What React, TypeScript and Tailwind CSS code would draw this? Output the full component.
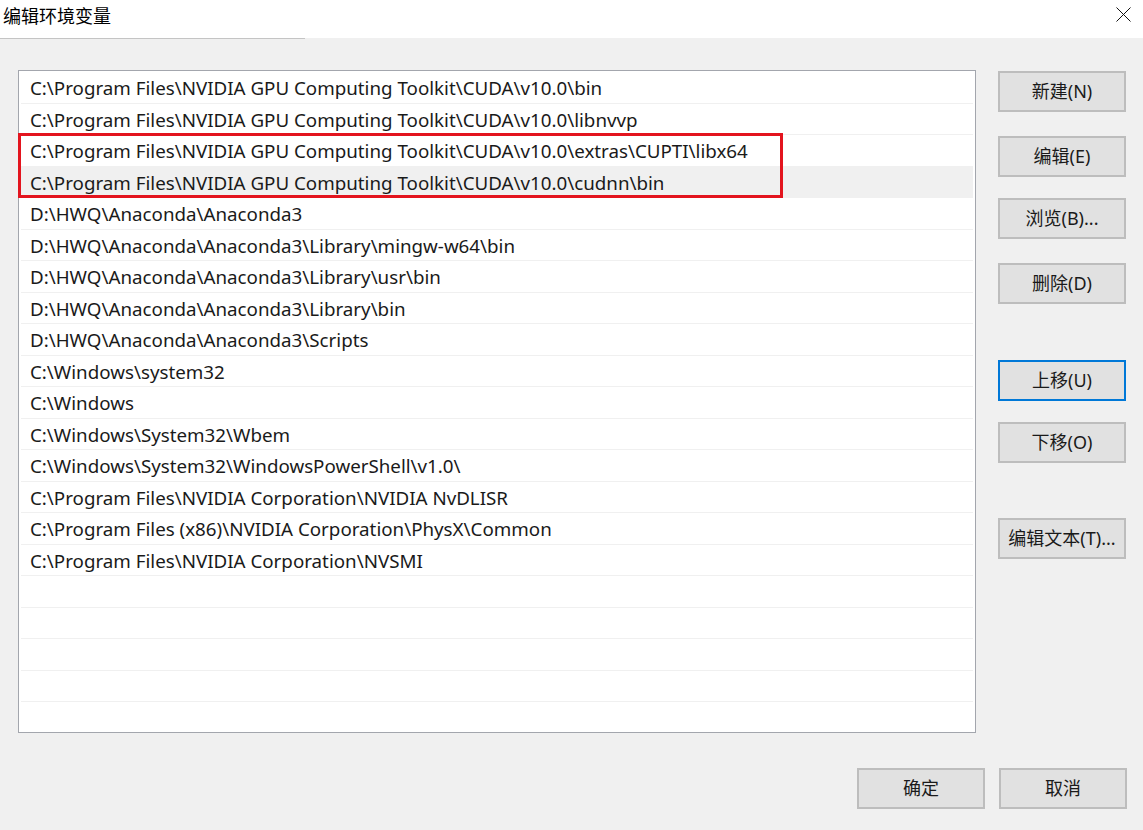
import React from 'react';

const paths = [
  'C:\\Program Files\\NVIDIA GPU Computing Toolkit\\CUDA\\v10.0\\bin',
  'C:\\Program Files\\NVIDIA GPU Computing Toolkit\\CUDA\\v10.0\\libnvvp',
  'C:\\Program Files\\NVIDIA GPU Computing Toolkit\\CUDA\\v10.0\\extras\\CUPTI\\libx64',
  'C:\\Program Files\\NVIDIA GPU Computing Toolkit\\CUDA\\v10.0\\cudnn\\bin',
  'D:\\HWQ\\Anaconda\\Anaconda3',
  'D:\\HWQ\\Anaconda\\Anaconda3\\Library\\mingw-w64\\bin',
  'D:\\HWQ\\Anaconda\\Anaconda3\\Library\\usr\\bin',
  'D:\\HWQ\\Anaconda\\Anaconda3\\Library\\bin',
  'D:\\HWQ\\Anaconda\\Anaconda3\\Scripts',
  'C:\\Windows\\system32',
  'C:\\Windows',
  'C:\\Windows\\System32\\Wbem',
  'C:\\Windows\\System32\\WindowsPowerShell\\v1.0\\',
  'C:\\Program Files\\NVIDIA Corporation\\NVIDIA NvDLISR',
  'C:\\Program Files (x86)\\NVIDIA Corporation\\PhysX\\Common',
  'C:\\Program Files\\NVIDIA Corporation\\NVSMI',
];

const rows = [...paths, ...Array(5).fill('')];

function Btn({ label, focused, className = '' }: { label: string; focused?: boolean; className?: string }) {
  return (
    <button
      className={`w-[128px] h-[41px] bg-[#e1e1e1] border-2 text-[18px] text-[#1a1a1a] flex items-center justify-center ${
        focused ? 'border-[#0078d7]' : 'border-[#bdbdbd]'
      } ${className}`}
    >
      {label}
    </button>
  );
}

export default function App() {
  return (
    <div
      className="relative w-[1143px] h-[830px] bg-[#f0f0f0] overflow-hidden flex flex-col"
      style={{ fontFamily: '"Noto Sans", "Noto Sans CJK SC", sans-serif' }}
    >
      {/* title bar */}
      <div className="h-[38px] bg-white flex items-start justify-between shrink-0">
        <div className="pl-[3px] pt-[2px] text-[18px] text-black" style={{ fontFamily: '"Noto Sans CJK SC", sans-serif' }}>
          编辑环境变量
        </div>
        <svg className="mt-[7px] mr-[12px]" width="15" height="15" viewBox="0 0 15 15">
          <path d="M0.5 0.5L14.5 14.5M14.5 0.5L0.5 14.5" stroke="#111" strokeWidth="1" />
        </svg>
      </div>
      <div className="h-px w-[305px] bg-[#c4c4c4] shrink-0" />

      {/* list and side buttons */}
      <div className="flex pt-[31px] pl-[18px]">
        <div className="w-[958px] h-[663px] bg-white border border-[#a3a6ad] overflow-hidden pt-px">
          {rows.map((p, i) => (
            <div
              key={i}
              className={`mx-[2px] h-[31.5px] border-b border-[#f0f0f0] flex items-center pl-[9px] pt-[2px] text-[18.75px] text-[#1a1a1a] whitespace-nowrap ${
                i === 3 ? 'bg-[#f0f0f0]' : ''
              }`}
            >
              {p}
            </div>
          ))}
        </div>

        <div className="ml-[22px] pt-px flex flex-col">
          <Btn label="新建(N)" />
          <Btn label="编辑(E)" className="mt-[24px]" />
          <Btn label="浏览(B)..." className="mt-[21px]" />
          <Btn label="删除(D)" className="mt-[24px]" />
          <Btn label="上移(U)" focused className="mt-[56px]" />
          <Btn label="下移(O)" className="mt-[21px]" />
          <Btn label="编辑文本(T)..." className="mt-[55px]" />
        </div>
      </div>

      {/* dialog buttons */}
      <div className="flex justify-end gap-[14px] pr-[16px] mt-[35px]">
        <Btn label="确定" />
        <Btn label="取消" />
      </div>

      {/* red highlight annotation */}
      <div className="absolute left-[18px] top-[133px] w-[765px] h-[65px] border-[3px] border-[#e3141e] pointer-events-none" />
    </div>
  );
}
